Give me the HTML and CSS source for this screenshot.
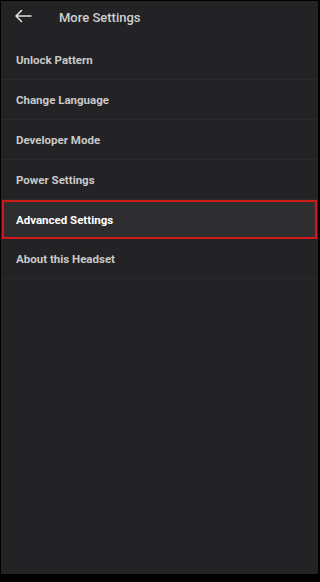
FILE: index.html
```html
<!DOCTYPE html>
<html lang="en">
<head>
    <meta charset="UTF-8">
    <meta name="viewport" content="width=device-width, initial-scale=1.0">
    <title>More Settings</title>
    <link rel="stylesheet" href="styles.css">
</head>
<body>
    <div class="screen">
        <div class="header">
            <svg class="back" width="18" height="14" viewBox="0 0 18 14">
                <path d="M17 7H2M7.5 1.5L2 7l5.5 5.5" fill="none" stroke="#e0e0e0" stroke-width="1.6" stroke-linecap="round" stroke-linejoin="round"/>
            </svg>
            <div class="title">More Settings</div>
        </div>
        <div class="list">
            <div class="item">Unlock Pattern</div>
            <div class="item">Change Language</div>
            <div class="item">Developer Mode</div>
            <div class="item">Power Settings</div>
            <div class="item active">Advanced Settings</div>
            <div class="item">About this Headset</div>
        </div>
    </div>
</body>
</html>
```

FILE: styles.css
```css
body {
    margin: 0;
    background: #000;
    font-family: Roboto, "Liberation Sans", sans-serif;
}
.screen {
    margin: 1px 2px 0 1px;
    height: 573px;
    background: #232325;
}
.header {
    display: flex;
    align-items: center;
    height: 39px;
    padding: 0 0 0 13px;
    box-sizing: border-box;
}
.back {
    margin-top: -10px;
}
.title {
    margin-left: 27px;
    margin-top: -6px;
    font-size: 13px;
    font-weight: 500;
    color: #cfcfcf;
}
.item {
    height: 40px;
    display: flex;
    align-items: center;
    padding-left: 15px;
    padding-top: 1px;
    font-size: 11.5px;
    font-weight: bold;
    color: #c9c9c9;
    border-bottom: 1px solid #2a2a2c;
    box-sizing: border-box;
}
.item.active {
    margin: 0 1px;
    padding-left: 12px;
    height: 39px;
    color: #fff;
    background: #2e2e30;
    border: 2px solid #d01a1a;
}
```
